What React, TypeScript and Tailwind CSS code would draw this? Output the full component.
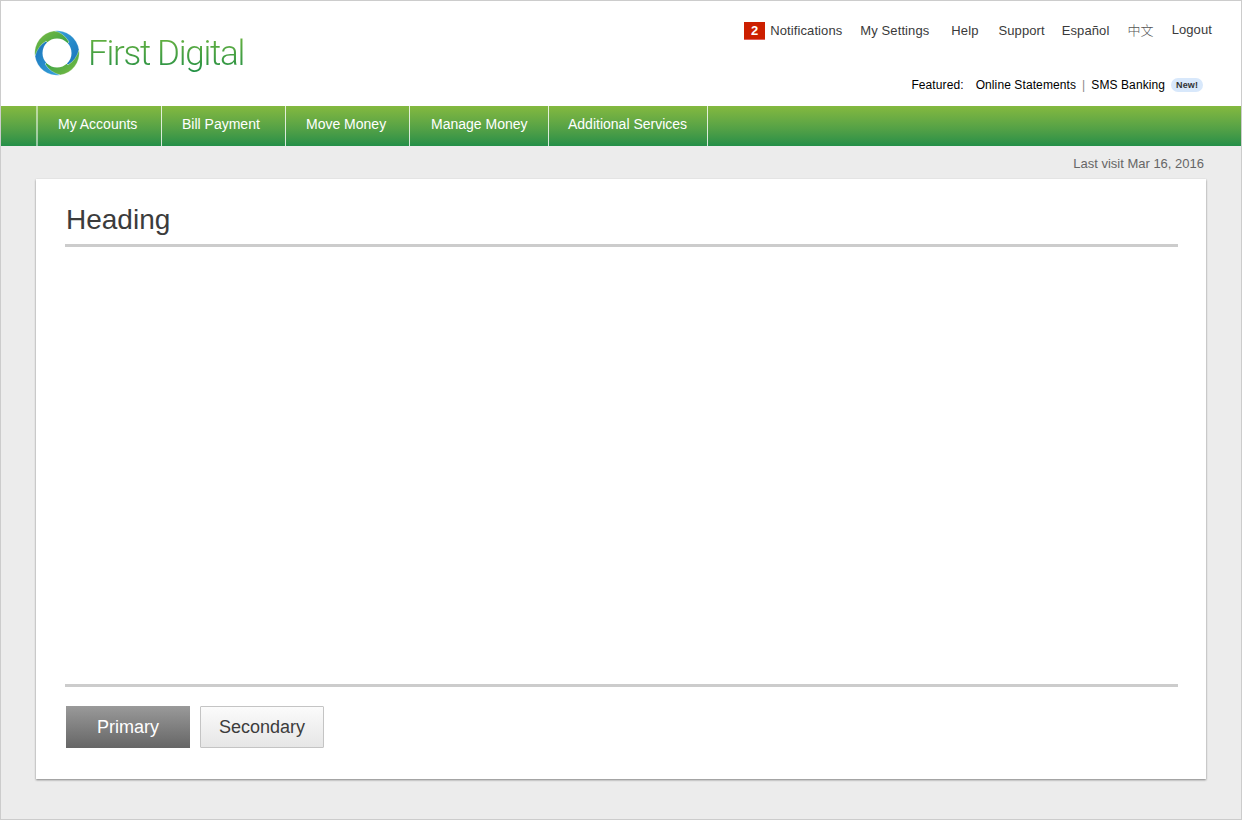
const navItems = [
  { label: "My Accounts", cls: "w-[124px] pl-[20px]" },
  { label: "Bill Payment", cls: "w-[124px] pl-[20px]" },
  { label: "Move Money", cls: "w-[124px] pl-[20px]" },
  { label: "Manage Money", cls: "w-[139px] pl-[21px]" },
  { label: "Additional Services", cls: "w-[159px] pl-[19px]" },
];

// one swirl segment, rotated round the ring's centre
const swirl = "M20 1 A22.2 22.2 0 0 1 45 20 Q44 29 34 35 L23 23 L35 12 Q30 4 20 1 Z";

function Logo() {
  return (
    <svg width="46" height="46" viewBox="0 0 46 46" className="shrink-0">
      <defs>
        <linearGradient id="logoGreen" x1="0" y1="1" x2="1" y2="0">
          <stop offset="0" stopColor="#1f9a4b" />
          <stop offset="1" stopColor="#82bd41" />
        </linearGradient>
        <linearGradient id="logoBlue" x1="0" y1="0" x2="1" y2="1">
          <stop offset="0" stopColor="#35a4dc" />
          <stop offset="1" stopColor="#1a72b9" />
        </linearGradient>
      </defs>
      <path d={swirl} fill="url(#logoBlue)" stroke="#ffffff" strokeWidth="0.25" />
      <path d={swirl} fill="url(#logoGreen)" stroke="#ffffff" strokeWidth="0.25" transform="rotate(90 23 23)" />
      <path d={swirl} fill="url(#logoBlue)" stroke="#ffffff" strokeWidth="0.25" transform="rotate(180 23 23)" />
      <path d={swirl} fill="url(#logoGreen)" stroke="#ffffff" strokeWidth="0.25" transform="rotate(270 23 23)" />
      <circle cx="23" cy="23" r="14.5" fill="#ffffff" />
    </svg>
  );
}

export default function App() {
  return (
    <div className="h-[820px] w-[1242px] overflow-hidden border border-[#cccccc] bg-[#ececec] font-['Liberation_Sans',Arial,sans-serif]">
      <header className="flex h-[105px] justify-between bg-white pl-[33px] pr-[29px]">
        <div className="flex h-[104px] items-center gap-[8px]">
          <Logo />
          <span className="mt-[9px] bg-gradient-to-b from-[#66b23f] to-[#008a45] bg-clip-text pb-[8px] font-['Roboto',sans-serif] text-[35px] font-light leading-none tracking-[-1.3px] text-transparent">
            First Digital
          </span>
        </div>
        <div className="flex flex-col items-end">
          <div className="mt-[21px] flex h-[18px] items-center text-[13px] tracking-[0.1px] text-[#3a3a3a]">
            <span className="mr-[5px] flex h-[18px] w-[21px] items-center justify-center border-b border-[#e0605a] bg-[#cc1f00] text-[13px] font-bold text-white">2</span>
            <span className="mr-[18px]">Notifications</span>
            <span className="mr-[22px]">My Settings</span>
            <span className="mr-[20px]">Help</span>
            <span className="mr-[17px]">Support</span>
            <span className="mr-[18px]">Español</span>
            <span className="-mt-[2px] mr-[18px] font-['Noto_Sans_CJK_SC',sans-serif] font-light text-[#555555]">中文</span>
            <span className="-mt-[2px]">Logout</span>
          </div>
          <div className="mr-[9px] mt-[37px] flex h-[16px] items-center text-[12px] tracking-[0.1px] text-black">
            <span className="mr-[12px]">Featured:</span>
            <span>Online Statements</span>
            <span className="mx-[6px] text-[#888888]">|</span>
            <span>SMS Banking</span>
            <span className="ml-[6px] rounded-full bg-[#d8e8fb] px-[5px] py-[2px] text-[9px] font-semibold leading-[10px] text-[#333333]">New!</span>
          </div>
        </div>
      </header>
      <nav className="flex h-[40px] bg-gradient-to-b from-[#84b93f] to-[#238f48] pl-[35px]">
        <div className="w-[2px] bg-white/50" />
        {navItems.map((item) => (
          <div key={item.label} className={`flex ${item.cls} items-center border-r border-white/80 pb-[3px] text-[14px] text-white`}>
            {item.label}
          </div>
        ))}
      </nav>
      <div className="flex h-[33px] items-center justify-end pr-[37px] pt-[2px] text-[13px] text-[#666666]">Last visit Mar 16, 2016</div>
      <main className="ml-[35px] flex h-[600px] w-[1170px] flex-col bg-white shadow-[0_1px_2px_rgba(0,0,0,0.45)]">
        <div className="ml-[29px] mr-[28px] h-[68px] border-b-[3px] border-[#cccccc] pl-[1px] pt-[25px]">
          <h1 className="text-[28px] leading-[32px] text-[#3c3c3c]">Heading</h1>
        </div>
        <div className="flex-1" />
        <div className="ml-[29px] mr-[28px] flex h-[95px] gap-[10px] border-t-[3px] border-[#cccccc] pl-[1px] pt-[19px]">
          <button className="h-[42px] w-[124px] bg-gradient-to-b from-[#9a9a9a] to-[#666666] text-[18px] text-white">Primary</button>
          <button className="h-[42px] w-[124px] rounded-[1px] border border-[#c4c4c4] bg-gradient-to-b from-[#fbfbfb] to-[#e6e6e6] text-[18px] text-[#3c3c3c]">Secondary</button>
        </div>
      </main>
    </div>
  );
}
